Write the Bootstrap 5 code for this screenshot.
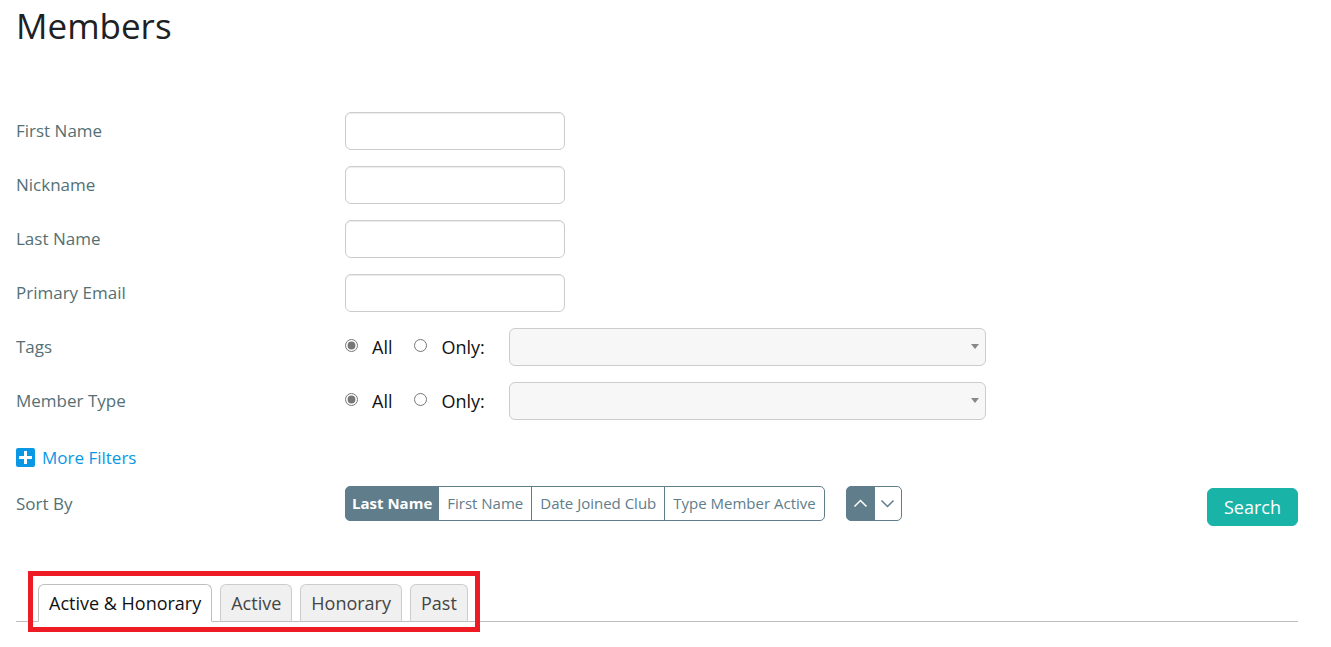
<!DOCTYPE html>
<html lang="en">
<head>
<meta charset="utf-8">
<meta name="viewport" content="width=device-width, initial-scale=1">
<title>Members</title>
<link href="https://cdn.jsdelivr.net/npm/bootstrap@5.3.0/dist/css/bootstrap.min.css" rel="stylesheet">
<script src="https://cdn.jsdelivr.net/npm/bootstrap@5.3.0/dist/js/bootstrap.bundle.min.js" defer></script>
<style>
body{font-family:"Open Sans",sans-serif;font-size:18px;line-height:26px;color:#111;background:#fff}
.page{padding:4px 33px 24px 16px}
h1{font-size:35px;line-height:44px;font-weight:400;color:#1d2125}
.filters{row-gap:16px;margin-top:64px}
.field-row{display:grid;grid-template-columns:329px 1fr;align-items:center;min-height:38px}
.caption{font-size:17px;line-height:24px;color:#547074}
.text-input{width:220px;height:38px;border:1px solid #ccc;border-radius:6px;box-shadow:inset 0 1px 1px rgba(0,0,0,.08)}
.pick{width:13px;height:13px;margin:0 14px 3px 0;accent-color:#767676}
.choices{column-gap:22px}
.drop{width:477px;max-width:100%;height:38px;padding:0 24px 0 8px;border:1px solid #ccc;border-radius:6px;background:#f7f7f7;appearance:none}
.drop-wrap{position:relative;margin-left:2px}
.drop-wrap svg{position:absolute;right:7px;top:16px;pointer-events:none}
.more{font-size:17px;line-height:24px;color:#0a97e4;gap:6px;margin-top:26px}
.sort-row{margin-top:16px;min-height:40px}
.sort-row .field-row{min-height:35px}
.sort-groups{column-gap:21px}
.sort-btn{font-size:15px;line-height:23px;padding:5px 8px;--bs-btn-color:#607d8b;--bs-btn-border-color:#607d8b;--bs-btn-bg:#fff;--bs-btn-border-radius:5px;--bs-btn-active-bg:#607d8b;--bs-btn-active-border-color:#607d8b;--bs-btn-active-color:#fff;--bs-btn-hover-bg:#eef2f4;--bs-btn-hover-color:#607d8b;--bs-btn-hover-border-color:#607d8b}
.sort-btn.active{padding:5px 6px;font-weight:700}
.order-btn.sort-btn{padding:5px 6px}
.order-btn svg{display:block}
.search-btn{font-size:18px;line-height:26px;padding:5px 16px;--bs-btn-color:#fff;--bs-btn-bg:#1ab3a8;--bs-btn-border-color:#1ab3a8;--bs-btn-border-radius:6px;--bs-btn-hover-color:#fff;--bs-btn-hover-bg:#159a90}
.tabs-bar{position:relative;margin-top:58px;padding-left:22px;gap:8px;--bs-nav-tabs-border-color:#bfbfbf}
.tabs-bar .nav-link{font-weight:400;line-height:26px;padding:5px 10px;border:1px solid #ccc;border-bottom-color:#bfbfbf;border-radius:6px 6px 0 0;background:#f0f0f0;color:#444}
.tabs-bar .nav-link.active{background:#fff;color:#111;border-color:#bfbfbf #bfbfbf #fff}
.tabs-frame{position:absolute;left:12px;top:-13px;bottom:-11px;width:452px;border:5px solid #ed1c24;pointer-events:none}
</style>
</head>
<body>
<main class="page">
<h1 class="mb-0">Members</h1>
<form>
<div class="filters d-flex flex-column">
<div class="field-row"><label class="caption" for="first">First Name</label><input type="text" class="text-input" id="first"></div>
<div class="field-row"><label class="caption" for="nick">Nickname</label><input type="text" class="text-input" id="nick"></div>
<div class="field-row"><label class="caption" for="last">Last Name</label><input type="text" class="text-input" id="last"></div>
<div class="field-row"><label class="caption" for="email">Primary Email</label><input type="email" class="text-input" id="email"></div>
<div class="field-row"><span class="caption" id="tags-cap">Tags</span>
<div class="choices d-flex align-items-center" role="group" aria-labelledby="tags-cap">
<label class="d-flex align-items-center"><input class="pick" type="radio" name="tags" checked>All</label>
<label class="d-flex align-items-center"><input class="pick" type="radio" name="tags">Only:</label>
<div class="drop-wrap"><select class="drop d-block" aria-label="Tags"><option></option></select><svg width="8" height="5" aria-hidden="true"><path d="M0 0h8L4 5z" fill="#888"/></svg></div>
</div></div>
<div class="field-row"><span class="caption" id="type-cap">Member Type</span>
<div class="choices d-flex align-items-center" role="group" aria-labelledby="type-cap">
<label class="d-flex align-items-center"><input class="pick" type="radio" name="type" checked>All</label>
<label class="d-flex align-items-center"><input class="pick" type="radio" name="type">Only:</label>
<div class="drop-wrap"><select class="drop d-block" aria-label="Member Type"><option></option></select><svg width="8" height="5" aria-hidden="true"><path d="M0 0h8L4 5z" fill="#888"/></svg></div>
</div></div>
</div>
<div class="d-flex"><a class="more d-flex align-items-center text-decoration-none" href="#"><svg width="20" height="20" viewBox="0 0 20 20" aria-hidden="true"><rect width="19" height="19" rx="2" fill="#0a97e4"/><path d="M8 3h3v5h5v3h-5v5H8v-5H3V8h5z" fill="#fff"/></svg>More Filters</a></div>
<div class="sort-row d-flex justify-content-between">
<div class="field-row align-self-start"><span class="caption" id="sort-cap">Sort By</span>
<div class="sort-groups d-flex" role="group" aria-labelledby="sort-cap">
<div class="btn-group"><button type="button" class="btn sort-btn active">Last Name</button><button type="button" class="btn sort-btn">First Name</button><button type="button" class="btn sort-btn">Date Joined Club</button><button type="button" class="btn sort-btn">Type Member Active</button></div>
<div class="btn-group"><button type="button" class="btn sort-btn order-btn active" aria-label="Ascending"><svg width="15" height="15" viewBox="0 0 15 15" fill="none" stroke="currentColor" stroke-width="1.500"><path d="M1.500 10.500l6-6 6 6"/></svg></button><button type="button" class="btn sort-btn order-btn" aria-label="Descending"><svg width="14" height="15" viewBox="0 0 14 15" fill="none" stroke="currentColor" stroke-width="1.500"><path d="M.5 4.500l6 6 6-6"/></svg></button></div>
</div></div>
<button type="submit" class="btn search-btn align-self-end">Search</button>
</div>
</form>
<ul class="nav nav-tabs tabs-bar">
<li class="nav-item"><a href="#" class="nav-link active" aria-current="page">Active &amp; Honorary</a></li>
<li class="nav-item"><a href="#" class="nav-link">Active</a></li>
<li class="nav-item"><a href="#" class="nav-link">Honorary</a></li>
<li class="nav-item"><a href="#" class="nav-link">Past</a></li>
<li class="tabs-frame" aria-hidden="true"></li>
</ul>
</main>
</body>
</html>
